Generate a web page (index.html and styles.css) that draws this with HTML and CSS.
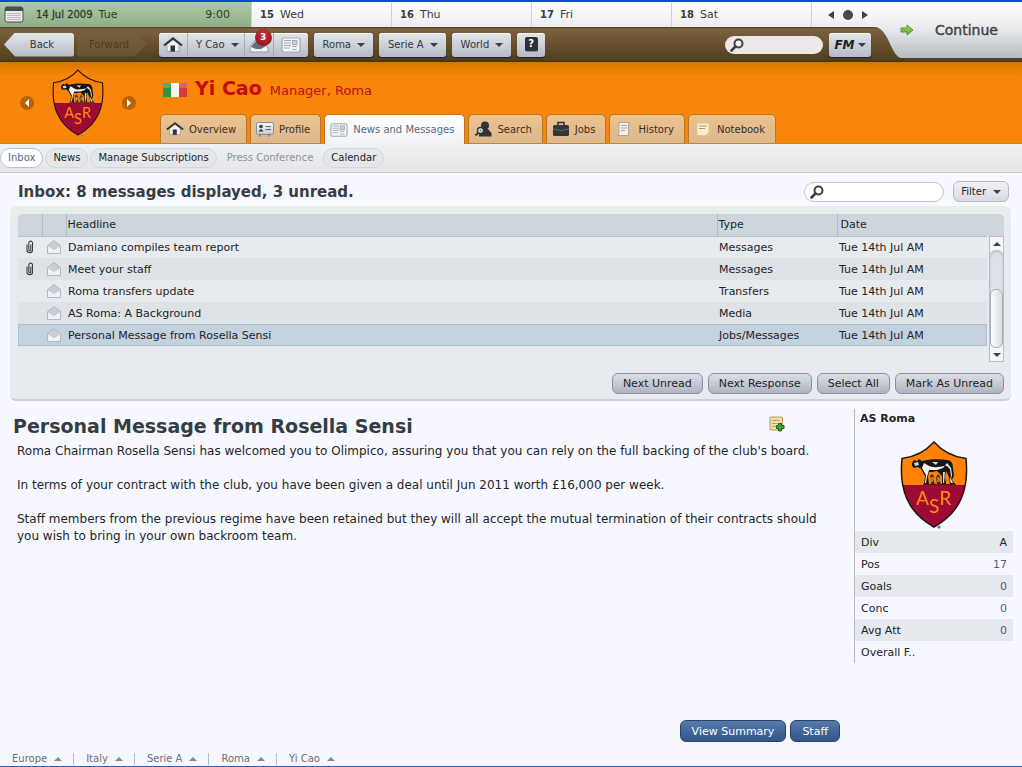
FILE: index.html
```html
<!DOCTYPE html>
<html lang="en">
<head>
    <meta charset="UTF-8">
    <meta name="viewport" content="width=device-width, initial-scale=1.0">
    <title>Yi Cao - News and Messages</title>
    <link rel="stylesheet" href="styles.css">
</head>
<body>
    <!-- Shared icons -->
    <svg class="sprite" aria-hidden="true">
        <defs>
            <linearGradient id="metal" x1="0" y1="0" x2="0" y2="1">
                <stop offset="0" stop-color="#fbfbfc"/>
                <stop offset="1" stop-color="#c3c8d1"/>
            </linearGradient>
            <linearGradient id="leaf" x1="0" y1="0" x2="0" y2="1">
                <stop offset="0" stop-color="#a8d860"/>
                <stop offset="1" stop-color="#5f9f2a"/>
            </linearGradient>
        </defs>
        <symbol id="crest" viewBox="0 0 68 88">
            <clipPath id="shield"><path d="M34 1C26 10 14 16 2 17.500C-1 48 7 71 34 86C61 71 69 48 66 17.500C54 16 42 10 34 1Z"/></clipPath>
            <g clip-path="url(#shield)">
                <rect width="68" height="44" fill="#ff8205"/>
                <rect y="44" width="68" height="44" fill="#9d0b35"/>
            </g>
            <path d="M34 1C26 10 14 16 2 17.500C-1 48 7 71 34 86C61 71 69 48 66 17.500C54 16 42 10 34 1Z" fill="none" stroke="#23130f" stroke-width="1.500"/>
            <path d="M12 22L14 19L17 20L19 18L22 20C30 18 39 18 48 19C52 20 53 23 53 27L54 35L52 39L55 43H50L49 36L46 30L45 36L46 43H42L42 35L37 30C33 31 31 31 29 31L28 36L29 43H24L25 35L21 28L18 26L14 27L12 25Z" fill="#17171a"/>
            <path d="M24 22C28 24 30 27 38 26C42 26 44 24 47 25L50 28L51 35L50 39L51 42H53L51 38L52 34L51 27L47 22L43 27L37 29L29 29L27 36L26 42H25L26 34L22 27Z" fill="#f3f1ee"/>
            <path d="M14 22L18 21L19 24L15 25ZM32 21L38 21L36 24ZM43 31L45 31L44 42H43Z" fill="#d9d6d2"/>
            <path d="M31 43L31 38L30 35L32 33L34 35L33 38L35 43ZM37 43L36 37L38 33L40 35L39 39L41 43Z" fill="#4a2c1c"/>
            <path d="M32 36V41M38 36V41" stroke="#e8c8a8" fill="none"/>
            <path d="M23 43.500H56" stroke="#4b1c18"/>
            <text x="16" y="64" font-family="Lato, sans-serif" font-size="19" fill="#ff8a12">A<tspan dy="8">S</tspan><tspan dy="-8">R</tspan></text>
            <circle cx="39" cy="86" r="1.500" fill="#777" stroke="#aaa" stroke-width=".5"/>
        </symbol>
        <symbol id="home" viewBox="0 0 20 16">
            <path d="M4 7V14.500H16V7L10 2.500Z" fill="#f3f3f4" stroke="#8d939c" stroke-width=".8"/>
            <path d="M1 8.500L10 1.500L19 8.500" fill="none" stroke="#33353a" stroke-width="2.200"/>
            <rect x="7.500" y="8.500" width="4.500" height="6" fill="#333539"/>
        </symbol>
        <symbol id="paper" viewBox="0 0 20 16">
            <rect x="1" y="1" width="18" height="14" rx="2" fill="#f4f5f8" stroke="#a1a8b3" stroke-width="1.200"/>
            <path d="M3 3.500H10M3 6H10M3 8.500H10M3 11H9M11 9.500H16M11 12.500H16" stroke="#a3a9b4"/>
            <rect x="11.500" y="3.500" width="4.500" height="4" fill="#cfd4dc" stroke="#a3a9b4"/>
        </symbol>
        <symbol id="glass" viewBox="0 0 14 14">
            <circle cx="8.500" cy="5.500" r="4" fill="#fff" fill-opacity=".6" stroke="#3d3f44" stroke-width="2"/>
            <path d="M5.500 8.500L1.500 12.500" stroke="#3d3f44" stroke-width="2.600" stroke-linecap="round"/>
        </symbol>
        <symbol id="mail" viewBox="0 0 16 16">
            <path d="M1.500 6.500L8 1.500L14.500 6.500V14.500H1.500Z" fill="#c9cdd4" stroke="#b3b8c2"/>
            <path d="M2 7.500L8 11L14 7.500V14H2Z" fill="#f0f1f4"/>
        </symbol>
        <symbol id="clip" viewBox="0 0 8 14">
            <path d="M1 4.500V10C1 13.500 6.500 13.500 6.500 10V3C6.500 .5 2.800 .5 2.800 3V9.500C2.800 11.200 4.800 11.200 4.800 9.500V4.500" fill="none" stroke="#3a3d42" stroke-width="1.100"/>
        </symbol>
    </svg>

    <header class="topbar">
        <div class="dates">
            <div class="day today">
                <svg class="calendar" viewBox="0 0 20 17"><rect x="1" y="1" width="18" height="15" rx="2" fill="#eceaf0" stroke="#4c504c"/><path d="M1 2.500Q1 1 3 1H17Q19 1 19 3V5H1Z" fill="#4c504c"/><path d="M3.500 7.500H17M3.500 9.500H17M3.500 11.500H17M3.500 13.500H17" stroke="#8e8794" stroke-dasharray="1 1"/></svg>
                <b>14 Jul 2009</b> <span>Tue</span>
                <time>9:00</time>
            </div>
            <div class="day"><b>15</b> <span>Wed</span></div>
            <div class="day"><b>16</b> <span>Thu</span></div>
            <div class="day"><b>17</b> <span>Fri</span></div>
            <div class="day"><b>18</b> <span>Sat</span></div>
            <div class="day pager">
                <button aria-label="Previous day"><svg width="6" height="8"><path d="M6 0V8L0 4Z" fill="#3e4043"/></svg></button>
                <button aria-label="Current day"><svg width="10" height="10"><circle cx="5" cy="5" r="5" fill="#47484c"/></svg></button>
                <button aria-label="Next day"><svg width="6" height="8"><path d="M0 0V8L6 4Z" fill="#3e4043"/></svg></button>
            </div>
        </div>

        <nav class="toolbar">
            <button class="back">Back</button>
            <button class="forward" disabled>Forward</button>
            <div class="button-group">
                <button aria-label="Home"><svg width="20" height="16"><use href="#home"/></svg></button>
                <button class="menu">Y Cao<i class="down"></i></button>
                <button class="inbox-btn" aria-label="Unread messages">
                    <svg width="20" height="16" viewBox="0 0 20 16"><path d="M1 11L5 4H15L19 11V15H1Z" fill="#eef0f4" stroke="#8f97a5"/><path d="M2 10L6 5L13 4L17 9L12 12H7Z" fill="#646d7c"/></svg>
                    <span class="badge">3</span>
                </button>
                <button aria-label="News"><svg width="20" height="16"><use href="#paper"/></svg></button>
            </div>
            <button class="tool menu">Roma<i class="down"></i></button>
            <button class="tool menu">Serie A<i class="down"></i></button>
            <button class="tool menu">World<i class="down"></i></button>
            <button class="tool help" aria-label="Help"><span>?</span></button>
            <label class="search top-search" aria-label="Search the game">
                <svg width="14" height="14"><use href="#glass"/></svg>
                <input type="text">
            </label>
            <button class="tool fm">FM<i class="down"></i></button>
        </nav>

        <button class="continue">
            <svg width="14" height="12" viewBox="0 0 14 12"><path d="M1 4H7V1L13 6L7 11V8H1Z" fill="url(#leaf)" stroke="#5d9430"/></svg>
            Continue
        </button>
    </header>

    <section class="banner">
        <div class="club-switch">
            <button class="round" aria-label="Previous club"><svg width="4" height="8"><path d="M4 0V8L0 4Z" fill="#fff"/></svg></button>
            <svg class="crest-small"><use href="#crest"/></svg>
            <button class="round" aria-label="Next club"><svg width="4" height="8"><path d="M0 0V8L4 4Z" fill="#fff"/></svg></button>
        </div>
        <div class="profile">
            <h1>
                <svg width="24" height="14" viewBox="0 0 24 14"><rect width="8" height="14" fill="#2f9442"/><rect x="8" width="8" height="14" fill="#f3f3ef"/><rect x="16" width="8" height="14" fill="#d93a3a"/><rect width="24" height="5" fill="#fff" fill-opacity=".2"/></svg>
                Yi Cao <small>Manager, Roma</small>
            </h1>
            <nav class="tabs">
                <a href="#"><svg width="18" height="16"><use href="#home"/></svg>Overview</a>
                <a href="#"><svg width="18" height="16" viewBox="0 0 18 16"><rect x=".5" y="1.500" width="17" height="12" rx="2" fill="url(#metal)" stroke="#858c98"/><circle cx="5" cy="5.500" r="1.800" fill="#34373c"/><path d="M2.500 10.500Q5 6 7.500 10.500Z" fill="#34373c"/><path d="M9.500 5.500H15M9.500 8.500H15" stroke="#5c616a"/><path d="M4 12.500V15.500M13 12.500V15.500" stroke="#858c98" stroke-width="2"/></svg>Profile</a>
                <a href="#" class="active"><svg width="18" height="16"><use href="#paper"/></svg>News and Messages</a>
                <a href="#"><svg width="18" height="16" viewBox="0 0 18 16"><circle cx="11" cy="4.500" r="4" fill="#333437"/><path d="M8 8H14L17.500 12V15.500H5V12Z" fill="#333437"/><path d="M4.500 11.500L1.500 14.500" stroke="#333437" stroke-width="2"/><circle cx="6.500" cy="9.500" r="3" fill="#f5f5f5" stroke="#333437" stroke-width="1.400"/><circle cx="6.500" cy="9.500" r="1" fill="#666"/></svg>Search</a>
                <a href="#"><svg width="18" height="16" viewBox="0 0 18 16"><path d="M6 4V1.500H12V4" fill="none" stroke="#333" stroke-width="1.600"/><rect x="1" y="4" width="16" height="11" rx="1.500" fill="#36373b"/><path d="M1 8Q9 11 17 8" fill="none" stroke="#66676c"/></svg>Jobs</a>
                <a href="#"><svg width="18" height="16" viewBox="0 0 18 16"><path d="M4 1.500H14.500L13.500 4V14.500H2.500L4 12Z" fill="#f3efe8" stroke="#aaa399"/><path d="M6 4.500H12M6 7H12M6 9.500H10" stroke="#aaa399"/></svg>History</a>
                <a href="#"><svg width="18" height="16" viewBox="0 0 18 16"><path d="M3 2H15V11L12 14.500H3Z" fill="#f8efca" stroke="#d9c891"/><path d="M5 5H13M5 7.500H11" stroke="#a09a80"/></svg>Notebook</a>
            </nav>
        </div>
    </section>

    <nav class="subnav">
        <a href="#" class="active">Inbox</a>
        <a href="#">News</a>
        <a href="#">Manage Subscriptions</a>
        <a class="disabled">Press Conference</a>
        <a href="#">Calendar</a>
    </nav>

    <main>
        <div class="inbox-head">
            <h2>Inbox: 8 messages displayed, 3 unread.</h2>
            <label class="search" aria-label="Search messages">
                <svg width="14" height="14"><use href="#glass"/></svg>
                <input type="text">
            </label>
            <button class="filter">Filter<i class="down"></i></button>
        </div>

        <section class="panel">
            <div class="list">
                <table>
                    <thead>
                        <tr><th class="narrow"></th><th class="narrow"></th><th>Headline</th><th class="type">Type</th><th class="date">Date</th></tr>
                    </thead>
                    <tbody>
                        <tr><td><svg width="8" height="14"><use href="#clip"/></svg></td><td><svg width="16" height="16"><use href="#mail"/></svg></td><td>Damiano compiles team report</td><td>Messages</td><td>Tue 14th Jul AM</td></tr>
                        <tr><td><svg width="8" height="14"><use href="#clip"/></svg></td><td><svg width="16" height="16"><use href="#mail"/></svg></td><td>Meet your staff</td><td>Messages</td><td>Tue 14th Jul AM</td></tr>
                        <tr><td></td><td><svg width="16" height="16"><use href="#mail"/></svg></td><td>Roma transfers update</td><td>Transfers</td><td>Tue 14th Jul AM</td></tr>
                        <tr><td></td><td><svg width="16" height="16"><use href="#mail"/></svg></td><td>AS Roma: A Background</td><td>Media</td><td>Tue 14th Jul AM</td></tr>
                        <tr class="selected"><td></td><td><svg width="16" height="16"><use href="#mail"/></svg></td><td>Personal Message from Rosella Sensi</td><td>Jobs/Messages</td><td>Tue 14th Jul AM</td></tr>
                    </tbody>
                </table>
                <div class="scrollbar">
                    <button aria-label="Scroll up"><i class="up"></i></button>
                    <div class="track"><div class="thumb"></div></div>
                    <button aria-label="Scroll down"><i class="down"></i></button>
                </div>
            </div>
            <div class="actions">
                <button>Next Unread</button>
                <button>Next Response</button>
                <button>Select All</button>
                <button>Mark As Unread</button>
            </div>
        </section>

        <div class="reader">
            <article class="message">
                <div class="message-head">
                    <h2>Personal Message from Rosella Sensi</h2>
                    <button class="note" aria-label="Add note"><svg width="16" height="16" viewBox="0 0 16 16"><rect x="1" y="1" width="12.500" height="13" rx="1" fill="#f3dfa2" stroke="#b39a5c"/><path d="M3 4.500H11M3 7.500H11M3 10.500H8" stroke="#b9a267"/><path d="M9.500 7.500H12.500V9.500H15V12.500H12.500V15H9.500V12.500H7.500V9.500H9.500Z" fill="#3fa53b" stroke="#1d5e1d"/></svg></button>
                </div>
                <p>Roma Chairman Rosella Sensi has welcomed you to Olimpico, assuring you that you can rely on the full backing of the club's board.</p>
                <p>In terms of your contract with the club, you have been given a deal until Jun 2011 worth £16,000 per week.</p>
                <p>Staff members from the previous regime have been retained but they will all accept the mutual termination of their contracts should you wish to bring in your own backroom team.</p>
                <div class="message-actions">
                    <button>View Summary</button>
                    <button>Staff</button>
                </div>
            </article>

            <aside class="club">
                <h3>AS Roma</h3>
                <svg class="crest-large"><use href="#crest"/></svg>
                <table>
                    <tr><th>Div</th><td class="plain">A</td></tr>
                    <tr><th>Pos</th><td>17</td></tr>
                    <tr><th>Goals</th><td>0</td></tr>
                    <tr><th>Conc</th><td>0</td></tr>
                    <tr><th>Avg Att</th><td>0</td></tr>
                    <tr><th>Overall F..</th><td></td></tr>
                </table>
            </aside>
        </div>
    </main>

    <footer class="crumbs">
        <a href="#">Europe<i class="up"></i></a>
        <a href="#">Italy<i class="up"></i></a>
        <a href="#">Serie A<i class="up"></i></a>
        <a href="#">Roma<i class="up"></i></a>
        <a href="#">Yi Cao<i class="up"></i></a>
    </footer>
</body>
</html>
```

FILE: styles.css
```css
* {
    margin: 0;
    padding: 0;
    box-sizing: border-box;
}

body {
    display: flex;
    flex-direction: column;
    min-height: 100vh;
    font-family: "DejaVu Sans", sans-serif;
    font-size: 11px;
    color: #222527;
    background: #f7f8ff;
}

button,
input {
    font: inherit;
    color: inherit;
    border: none;
    background: none;
}

button {
    white-space: nowrap;
    cursor: pointer;
}

a {
    color: inherit;
    text-decoration: none;
}

svg {
    display: block;
    flex: none;
}

.sprite {
    position: absolute;
    width: 0;
    height: 0;
}

.down,
.up {
    flex: none;
    border: solid transparent;
    border-width: 0 4px;
}

.down {
    border-top: 4px solid #3c4148;
}

.up {
    border-bottom: 4px solid #3c4148;
}

/* Date strip and toolbar */
.topbar {
    display: grid;
    grid-template-columns: 1fr 150px;
    grid-template-rows: 25px 35px;
    border-top: 2px solid #0a4bd6;
    background: #fff;
}

.dates {
    grid-area: 1 / 1;
    display: grid;
    grid-template-columns: 9fr repeat(4, 5fr) 60px;
    background: linear-gradient(#fff, #ececee);
}

.day {
    display: flex;
    align-items: center;
    gap: 6px;
    padding-left: 8px;
    border-right: 1px solid #cfd0d4;
    color: #3b3e41;
}

.day b {
    font-size: 10px;
}

.today {
    padding: 0 21px 0 4px;
    color: #2f3c2e;
    background: linear-gradient(#b0c8a6, #8eae86);
}

.today b {
    font-weight: normal;
    -webkit-text-stroke: 0.3px #2f3c2e;
}

.today time {
    margin-left: auto;
}

.calendar {
    width: 20px;
    height: 17px;
    margin-right: 6px;
}

.pager {
    justify-content: center;
    gap: 9px;
    padding: 0 0 0 12px;
    border: none;
}

.toolbar {
    grid-area: 2 / 1 / 3 / 3;
    display: flex;
    align-items: center;
    gap: 6px;
    padding: 0 151px 0 4px;
    font-size: 10px;
    color: #34383d;
    background: linear-gradient(#4f3d22, #7b6241 2px, #523e1d 33px, #40300f);
}

.toolbar button {
    display: flex;
    align-items: center;
    justify-content: center;
    height: 24px;
}

.toolbar .back,
.toolbar .forward {
    width: 70px;
    border-radius: 3px;
    background: linear-gradient(#e3e6eb, #b4bac7);
}

.toolbar .back {
    padding-left: 6px;
    clip-path: polygon(0 50%, 11px 0, 100% 0, 100% 100%, 11px 100%);
}

.toolbar .forward {
    margin: 0 6px 0 -3px;
    padding-right: 6px;
    color: #4b3b22;
    background: #75603f99;
    clip-path: polygon(0 0, 57px 0, 100% 50%, 57px 100%, 0 100%);
}

.button-group,
.toolbar .tool {
    border-radius: 3px;
    background: linear-gradient(#e3e6eb, #b4bac7);
    box-shadow: inset 0 1px #f3f4f6, 0 1px 1px #2d2008;
}

.button-group {
    display: flex;
}

.button-group button {
    position: relative;
    padding: 0 4px;
    border-right: 1px solid #a3aab7;
}

.button-group button:last-child {
    padding: 0 7px;
    border: none;
}

.toolbar .menu {
    gap: 6px;
    padding: 0 8px;
}

.button-group .menu {
    padding: 0 5px 0 8px;
}

.toolbar .tool.menu {
    padding: 0 8px 0 9px;
}

.badge {
    position: absolute;
    top: -4px;
    right: 1px;
    width: 17px;
    height: 17px;
    border-radius: 50%;
    font-size: 9px;
    font-weight: bold;
    line-height: 17px;
    color: #fff;
    background: radial-gradient(circle at 50% 30%, #c8323a, #8e0d16);
}

.toolbar .help {
    width: 28px;
}

.help span {
    width: 13px;
    height: 15px;
    border-bottom: 1px solid #8a8e95;
    border-radius: 2px;
    font-weight: bold;
    line-height: 14px;
    color: #fff;
    background: #2d3037;
}

.search {
    display: flex;
    align-items: center;
    width: 140px;
    height: 20px;
    padding-left: 5px;
    border: 1px solid #c4c6cd;
    border-radius: 10px;
    background: #fff;
}

.search input {
    width: 100%;
    min-width: 0;
    outline: none;
}

.top-search {
    width: 98px;
    height: 18px;
    margin-left: auto;
    border: none;
    background: #ece8e8;
}

.toolbar .fm {
    gap: 3px;
    width: 42px;
    font-weight: bold;
    font-style: italic;
    font-size: 12px;
    color: #1d1e20;
}

.continue {
    grid-area: 1 / 1 / 3 / 3;
    justify-self: end;
    display: flex;
    align-items: center;
    gap: 21px;
    width: 150px;
    height: 56px;
    padding-left: 28px;
    font-size: 14px;
    color: #3c4248;
    -webkit-text-stroke: 0.4px #3c4248;
    background: linear-gradient(#fff, #e6e8ea 50%, #b5bbc0);
    clip-path: path("M0 0H150V56H30C19 56 17 25 2 25H0Z");
}

/* Club banner */
.banner {
    display: grid;
    grid-template-columns: 160px 1fr;
    height: 82px;
    border-bottom: 1px solid #c8852c;
    background: linear-gradient(#d87500, #f8860a 14px);
}

.club-switch {
    display: flex;
    align-items: center;
    gap: 18px;
    padding-left: 20px;
}

.round {
    display: grid;
    place-items: center;
    width: 14px;
    height: 14px;
    border-radius: 50%;
    background: #b96207;
}

.crest-small {
    width: 52px;
    height: 68px;
}

.profile {
    display: flex;
    flex-direction: column;
    justify-content: space-between;
}

.banner h1 {
    display: flex;
    align-items: baseline;
    gap: 8px;
    padding: 15px 0 0 3px;
    font-size: 19px;
    line-height: 22px;
    color: #c20d0d;
}

.banner h1 svg {
    align-self: center;
}

.banner small {
    font-size: 13px;
    font-weight: normal;
}

.tabs {
    display: flex;
    gap: 3px;
}

.tabs a {
    display: flex;
    align-items: center;
    gap: 5px;
    height: 29px;
    padding: 0 10px 0 5px;
    border: 1px solid #b97523;
    border-bottom: none;
    border-radius: 5px 5px 0 0;
    font-size: 10px;
    color: #35302a;
    background: linear-gradient(#eec28c, #dcb88e);
}

.tabs .active {
    height: 30px;
    margin-bottom: -1px;
    color: #5a6b80;
    background: linear-gradient(#fff, #f1f3f6);
}

.subnav {
    display: flex;
    align-items: center;
    gap: 2px;
    height: 29px;
    border-bottom: 1px solid #c9cbd1;
    font-size: 10px;
    background: linear-gradient(#eef1f3, #e4e5e7);
}

.subnav a {
    padding: 3px 7px;
    border: 1px solid #d2d8dc;
    border-radius: 10px;
    line-height: 12px;
    background: #e3e8ea;
}

.subnav .active {
    border-color: #bbc0ca;
    color: #5a6b80;
    background: #fff;
}

.subnav .disabled {
    border-color: transparent;
    color: #8f959b;
    background: none;
}

/* Message list */
main {
    flex: 1;
    display: flex;
    flex-direction: column;
}

.inbox-head {
    display: flex;
    align-items: center;
    gap: 9px;
    padding: 8px 13px 4px 18px;
}

.inbox-head h2 {
    margin-right: auto;
    font-size: 15px;
    color: #373d42;
}

.filter {
    display: flex;
    align-items: center;
    gap: 7px;
    height: 21px;
    padding: 0 7px;
    border: 1px solid #b5b9c2;
    border-radius: 6px;
    font-size: 10px;
    background: linear-gradient(#f2f2f6, #d7dae1);
}

.panel {
    margin: 0 11px 0 10px;
    padding: 8px 7px 5px 8px;
    border-bottom: 2px solid #cfd1d6;
    border-radius: 6px;
    background: linear-gradient(#e8eeec, #e7eaee 30px);
}

.list {
    display: grid;
    grid-template-columns: 1fr 17px;
    border-radius: 5px 5px 0 0;
    background: linear-gradient(#cdd6dc 22px, transparent 22px);
}

.list table {
    width: 100%;
    height: min-content;
    border-collapse: collapse;
    table-layout: fixed;
}

.list th {
    height: 22px;
    padding-left: 1px;
    border-left: 1px solid #b3bdc4;
    border-bottom: 1px solid #b7c2c8;
    font-weight: normal;
    text-align: left;
}

.list th:first-child {
    border-left: none;
}

.list .narrow {
    width: 24px;
}

.list .type {
    width: 120px;
}

.list .date {
    width: 150px;
    padding-left: 3px;
}

.list td {
    height: 22px;
    padding-left: 2px;
}

.list td:first-child,
.list td:nth-child(2) {
    padding: 0;
}

.list td svg {
    margin: 0 auto;
}

.list tbody tr:nth-child(even) {
    background: #dde3e7;
}

.list .selected {
    background: #c4d1de;
    outline: 1px solid #aebfcc;
    outline-offset: -1px;
}

.scrollbar {
    display: flex;
    flex-direction: column;
    width: 15px;
    height: 126px;
    margin: 22px 0 0 2px;
    border: 1px solid #b9bcc6;
    background: #f5f6fa;
}

.scrollbar button {
    display: grid;
    place-items: center;
    height: 13px;
}

.track {
    flex: 1;
    display: flex;
    align-items: flex-end;
    border-radius: 6px;
    background: #dfe1ea;
    box-shadow: inset 0 2px 2px #b9bcc6;
}

.thumb {
    width: 100%;
    height: 60%;
    border: 1px solid #a9adb7;
    border-radius: 6px;
    background: linear-gradient(to right, #fbfbfc, #dcdde2);
}

.actions,
.message-actions {
    display: flex;
    justify-content: flex-end;
    gap: 5px;
}

.actions {
    padding-top: 11px;
}

.actions button,
.message-actions button {
    height: 21px;
    padding: 0 10px;
    border: 1px solid #8b909d;
    border-radius: 6px;
    background: linear-gradient(#dcdfe6, #aeb4c2);
}

/* Message reader */
.reader {
    flex: 1;
    display: grid;
    grid-template-columns: 1fr 159px;
    padding: 8px 9px 0 13px;
}

.message {
    display: flex;
    flex-direction: column;
    padding: 5px 14px 9px 0;
}

.message-head {
    display: flex;
    align-items: center;
    justify-content: space-between;
    height: 24px;
    margin-bottom: 5px;
    padding-right: 55px;
}

.message-head h2 {
    font-size: 19px;
    color: #333d43;
}

.note {
    align-self: flex-start;
    height: 20px;
}

.message p {
    margin: 0 0 17px 4px;
    font-size: 12px;
    line-height: 17px;
}

.message-actions {
    gap: 4px;
    margin-top: auto;
}

.message-actions button {
    height: 22px;
    padding: 0 11px;
    border-color: #2b4466;
    color: #fff;
    background: linear-gradient(#5579ab, #33558a);
}

.club {
    align-self: start;
    border-left: 1px solid #b4b6bd;
}

.club h3 {
    height: 32px;
    padding-left: 5px;
    font-size: 11px;
    line-height: 20px;
}

.crest-large {
    width: 68px;
    height: 88px;
    margin: 0 auto 2px 45px;
}

.club table {
    width: 100%;
    border-collapse: collapse;
}

.club tr:nth-child(odd) {
    background: #e5e9ee;
}

.club th,
.club td {
    height: 22px;
    padding: 0 6px;
    font-weight: normal;
    text-align: left;
}

.club td {
    text-align: right;
    color: #4b5f74;
}

.club .plain {
    color: inherit;
}

/* Breadcrumb bar */
.crumbs {
    display: flex;
    align-items: center;
    height: 16px;
    border-bottom: 1px solid #2c5fc0;
    font-size: 10px;
    color: #6b6e75;
}

.crumbs a {
    display: flex;
    align-items: center;
    gap: 7px;
    padding: 0 11px 0 12px;
    line-height: 12px;
    border-right: 1px solid #bcbec6;
}

.crumbs a:last-child {
    border: none;
}

.crumbs .up {
    border-bottom-color: #85888f;
}
```
